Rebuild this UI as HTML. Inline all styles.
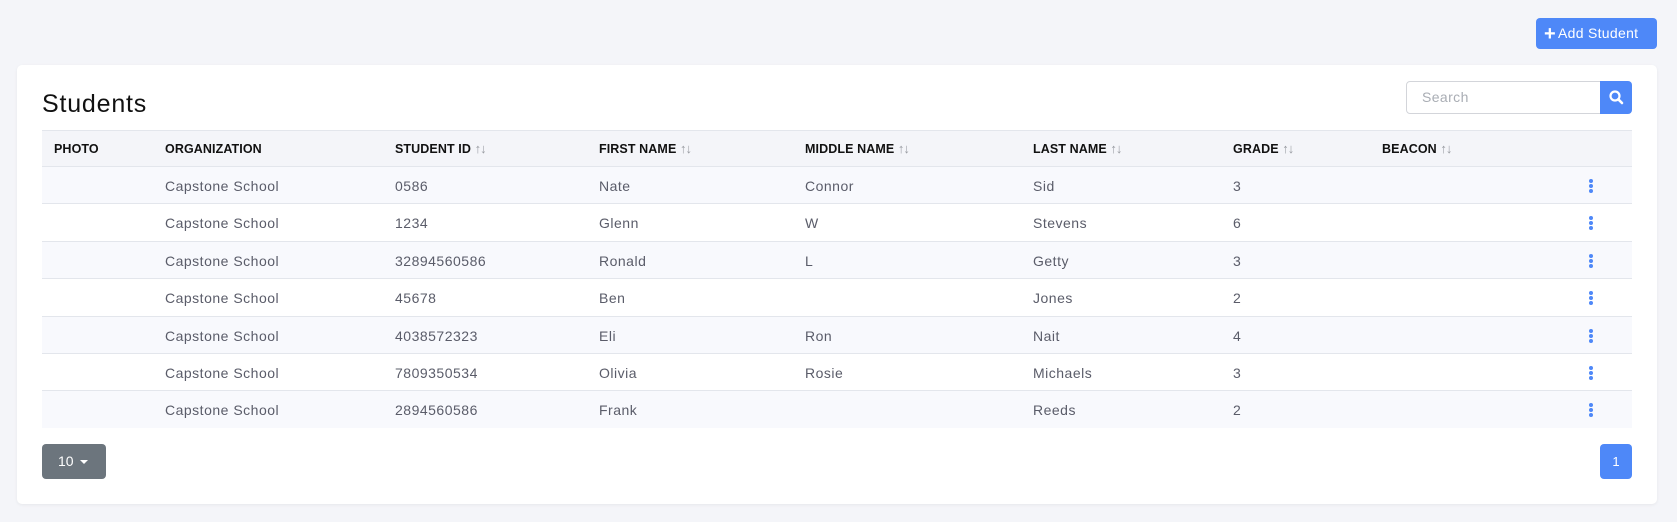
<!DOCTYPE html>
<html><head><meta charset="utf-8"><style>
*{box-sizing:border-box;margin:0;padding:0}
body{width:1677px;height:522px;background:#f4f5f9;font-family:"Liberation Sans",sans-serif;position:relative;overflow:hidden}
.add{position:absolute;left:1536px;top:18px;width:121px;height:31px;background:#4e88f8;border-radius:4px;color:#fff;font-size:14px;line-height:31px;padding-left:8px;letter-spacing:.3px}
.add b{font-size:20px;font-weight:bold;vertical-align:-2px;margin-right:2px}
.card{position:absolute;left:17px;top:65px;width:1640px;height:439px;background:#fff;border-radius:5px;box-shadow:0 1px 3px rgba(0,0,0,.06)}
h1{position:absolute;left:42px;top:90px;font-size:25px;font-weight:normal;color:#111;letter-spacing:.8px}
.search{position:absolute;left:1406px;top:81px;width:195px;height:33px;border:1px solid #d3d5da;border-radius:4px 0 0 4px;color:#a9adb4;font-size:14px;line-height:31px;padding-left:15px;letter-spacing:.4px}
.sbtn{position:absolute;left:1600px;top:81px;width:32px;height:33px;background:#4e88f8;border-radius:0 4px 4px 0}
.row{position:absolute;left:42px;width:1590px;height:37.4px;border-top:1px solid #e3e6ec;font-size:14px;color:#5a5c69;letter-spacing:.5px}
.row span{position:absolute;top:11px;white-space:nowrap}
.hd{background:#f4f5f9;border-top:1px solid #e3e6ec;height:36px;color:#111;font-weight:bold;font-size:12.5px;letter-spacing:.1px}
.hd span{top:10px;line-height:16px}
.ar{color:#999ca2;font-weight:bold;font-style:normal;font-size:13px;letter-spacing:-1px;line-height:16px}
.odd{background:#f8f9fd}
.dots{position:absolute;left:1547px;top:12px;width:4px}
.dots i{display:block;width:4px;height:4px;border-radius:50%;background:#4e88f8;margin-bottom:1px}
.sel{position:absolute;left:42px;top:444px;width:64px;height:35px;background:#6c757d;border-radius:4px;color:#fff;font-size:14px;line-height:35px;padding-left:16px}
.sel:after{content:"";position:absolute;left:38px;top:16px;border-left:4px solid transparent;border-right:4px solid transparent;border-top:4px solid #fff}
.pg{position:absolute;left:1600px;top:444px;width:32px;height:35px;background:#4e88f8;border-radius:4px;color:#fff;font-size:13px;line-height:35px;text-align:center}
</style></head><body>
<div class="add"><b>+</b>Add Student</div>
<div class="card"></div>
<h1>Students</h1>
<div class="search">Search</div>
<div class="sbtn"><svg width="32" height="33" viewBox="0 0 32 33"><circle cx="15" cy="15" r="4.5" fill="none" stroke="#fff" stroke-width="2.2"/><path d="M18.3 18.3L22 22" stroke="#fff" stroke-width="2.6" stroke-linecap="round"/></svg></div>

<div class="row hd" style="top:130px"><span style="left:12px">PHOTO</span><span style="left:123px">ORGANIZATION</span><span style="left:353px">STUDENT ID <i class="ar">↑↓</i></span><span style="left:557px">FIRST NAME <i class="ar">↑↓</i></span><span style="left:763px">MIDDLE NAME <i class="ar">↑↓</i></span><span style="left:991px">LAST NAME <i class="ar">↑↓</i></span><span style="left:1191px">GRADE <i class="ar">↑↓</i></span><span style="left:1340px">BEACON <i class="ar">↑↓</i></span></div>

<div class="row odd" style="top:166px"><span style="left:123px">Capstone School</span><span style="left:353px">0586</span><span style="left:557px">Nate</span><span style="left:763px">Connor</span><span style="left:991px">Sid</span><span style="left:1191px">3</span><div class="dots"><i></i><i></i><i></i></div></div>
<div class="row" style="top:203.4px"><span style="left:123px">Capstone School</span><span style="left:353px">1234</span><span style="left:557px">Glenn</span><span style="left:763px">W</span><span style="left:991px">Stevens</span><span style="left:1191px">6</span><div class="dots"><i></i><i></i><i></i></div></div>
<div class="row odd" style="top:240.8px"><span style="left:123px">Capstone School</span><span style="left:353px">32894560586</span><span style="left:557px">Ronald</span><span style="left:763px">L</span><span style="left:991px">Getty</span><span style="left:1191px">3</span><div class="dots"><i></i><i></i><i></i></div></div>
<div class="row" style="top:278.2px"><span style="left:123px">Capstone School</span><span style="left:353px">45678</span><span style="left:557px">Ben</span><span style="left:991px">Jones</span><span style="left:1191px">2</span><div class="dots"><i></i><i></i><i></i></div></div>
<div class="row odd" style="top:315.6px"><span style="left:123px">Capstone School</span><span style="left:353px">4038572323</span><span style="left:557px">Eli</span><span style="left:763px">Ron</span><span style="left:991px">Nait</span><span style="left:1191px">4</span><div class="dots"><i></i><i></i><i></i></div></div>
<div class="row" style="top:353px"><span style="left:123px">Capstone School</span><span style="left:353px">7809350534</span><span style="left:557px">Olivia</span><span style="left:763px">Rosie</span><span style="left:991px">Michaels</span><span style="left:1191px">3</span><div class="dots"><i></i><i></i><i></i></div></div>
<div class="row odd" style="top:390.4px"><span style="left:123px">Capstone School</span><span style="left:353px">2894560586</span><span style="left:557px">Frank</span><span style="left:991px">Reeds</span><span style="left:1191px">2</span><div class="dots"><i></i><i></i><i></i></div></div>

<div class="sel">10</div>
<div class="pg">1</div>
</body></html>
